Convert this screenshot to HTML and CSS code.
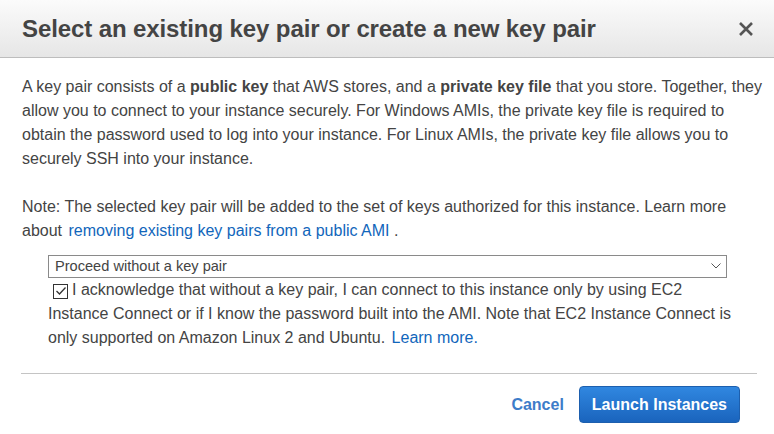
FILE: index.html
```html
<!DOCTYPE HTML>
<html>
<head>
  <meta charset="UTF-8">
  <title>Select key pair</title>
  <link rel="stylesheet" href="styles.css">
</head>
<body>
  <div class="modal">
    <div class="modal-header">
      <h2>Select an existing key pair or create a new key pair</h2>
      <button class="close" aria-label="Close">
        <svg width="16" height="16" viewBox="0 0 16 16">
          <path d="M2 2 L14 14 M14 2 L2 14" stroke="#555" stroke-width="2.6" fill="none"/>
        </svg>
      </button>
    </div>
    <div class="modal-body">
      <p>A key pair consists of a <b>public key</b> that AWS stores, and a <b>private key file</b> that you store. Together, they allow you to connect to your instance securely. For Windows AMIs, the private key file is required to obtain the password used to log into your instance. For Linux AMIs, the private key file allows you to securely SSH into your instance.</p>
      <p class="note">Note: The selected key pair will be added to the set of keys authorized for this instance. Learn more about <a href="#" class="inline-link">removing existing key pairs from a public AMI</a> .</p>
      <div class="key-choice">
        <div class="select-wrap">
          <select>
            <option>Proceed without a key pair</option>
            <option>Choose an existing key pair</option>
            <option>Create a new key pair</option>
          </select>
          <svg class="chevron" width="10" height="6" viewBox="0 0 10 6">
            <path d="M0.5 0.5 L5 5 L9.5 0.5" stroke="#555" stroke-width="1" fill="none"/>
          </svg>
        </div>
        <label class="ack">
          <span class="check">
            <svg width="12" height="10" viewBox="0 0 12 10">
              <path d="M1.5 5 L4.5 8 L10.5 1.5" stroke="#333" stroke-width="1.3" fill="none"/>
            </svg>
          </span>I acknowledge that without a key pair, I can connect to this instance only by using EC2 Instance Connect or if I know the password built into the AMI. Note that EC2 Instance Connect is only supported on Amazon Linux 2 and Ubuntu. <a href="#" class="inline-link">Learn more.</a>
        </label>
      </div>
    </div>
    <div class="modal-footer">
      <a href="#" class="cancel">Cancel</a>
      <button class="button">Launch Instances</button>
    </div>
  </div>
</body>
</html>
```

FILE: styles.css
```css
body {
  margin: 0;
  background-color: #ffffff;
  color: #444444;
  font-family: 'Liberation Sans', Arial, Helvetica, sans-serif;
}
.modal {
  width: 774px;
  height: 434px;
  background-color: #ffffff;
}
.modal-header {
  height: 57px;
  display: flex;
  align-items: center;
  justify-content: space-between;
  padding: 0 20px 0 22px;
  background: linear-gradient(#fbfbfb, #e6e6e6);
  border-bottom: 1px solid #bdbdbd;
}
.modal-header h2 {
  margin: 0;
  font-size: 24px;
  font-weight: bold;
  color: #444444;
  letter-spacing: -0.1px;
}
.close {
  background: none;
  border: none;
  padding: 0;
  width: 16px;
  height: 16px;
  cursor: pointer;
}
.modal-body {
  padding: 17px 8px 0 22px;
  font-size: 16px;
  line-height: 24px;
}
.modal-body p {
  margin: 0 0 24px 0;
}
.modal-body p.note {
  margin-bottom: 11px;
}
a {
  color: #1166bb;
  text-decoration: none;
}
.inline-link {
  margin-left: 2px;
}
.key-choice {
  width: 688px;
  margin-left: 26px;
}
.select-wrap {
  position: relative;
  width: 679px;
}
.select-wrap select {
  appearance: none;
  -webkit-appearance: none;
  width: 100%;
  height: 23px;
  margin: 0;
  padding: 0 0 0 6px;
  border: 1px solid #8a8a8a;
  border-radius: 0;
  background-color: #ffffff;
  color: #444444;
  font-family: 'Liberation Sans', Arial, Helvetica, sans-serif;
  font-size: 14.6px;
}
.chevron {
  position: absolute;
  right: 6px;
  top: 9px;
}
.ack {
  display: block;
  margin-top: 0;
}
.check {
  display: inline-flex;
  align-items: center;
  justify-content: center;
  width: 13px;
  height: 13px;
  margin: 0 4px 0 5px;
  border: 1px solid #333333;
  vertical-align: -1px;
}
.modal-footer {
  margin: 23px 17px 0 21px;
  padding: 12px 17px 0 0;
  border-top: 1px solid #c4c4c4;
  display: flex;
  align-items: center;
  justify-content: flex-end;
  gap: 15px;
}
.cancel {
  color: #3d7cc9;
  font-weight: bold;
  font-size: 16px;
}
.button {
  height: 37px;
  padding: 0 12px;
  background: linear-gradient(#3087e0, #1a64bd);
  border: 1px solid #1d5fae;
  border-radius: 4px;
  color: #ffffff;
  font-family: 'Liberation Sans', Arial, Helvetica, sans-serif;
  font-size: 16px;
  font-weight: bold;
}
```
